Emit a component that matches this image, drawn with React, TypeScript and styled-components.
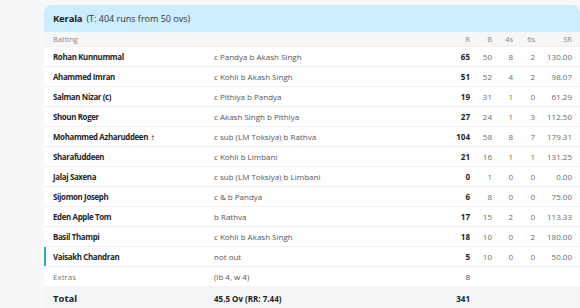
import React from "react";
import styled, { createGlobalStyle } from "styled-components";

const GlobalStyle = createGlobalStyle`
  html, body {
    margin: 0;
    padding: 0;
    background: #f8f8fa;
    overflow: hidden;
  }
  body {
    font-family: "Open Sans", "Noto Sans", sans-serif;
  }
`;

type Batter = {
  name: string;
  mark?: string;
  dismissal: string;
  r: string;
  b: string;
  fours: string;
  sixes: string;
  sr: string;
  active?: boolean;
};

const batters: Batter[] = [
  { name: "Rohan Kunnummal", dismissal: "c Pandya b Akash Singh", r: "65", b: "50", fours: "8", sixes: "2", sr: "130.00" },
  { name: "Ahammed Imran", dismissal: "c Kohli b Akash Singh", r: "51", b: "52", fours: "4", sixes: "2", sr: "98.07" },
  { name: "Salman Nizar (c)", dismissal: "c Pithiya b Pandya", r: "19", b: "31", fours: "1", sixes: "0", sr: "61.29" },
  { name: "Shoun Roger", dismissal: "c Akash Singh b Pithiya", r: "27", b: "24", fours: "1", sixes: "3", sr: "112.50" },
  { name: "Mohammed Azharuddeen", mark: "†", dismissal: "c sub (LM Toksiya) b Rathva", r: "104", b: "58", fours: "8", sixes: "7", sr: "179.31" },
  { name: "Sharafuddeen", dismissal: "c Kohli b Limbani", r: "21", b: "16", fours: "1", sixes: "1", sr: "131.25" },
  { name: "Jalaj Saxena", dismissal: "c sub (LM Toksiya) b Limbani", r: "0", b: "1", fours: "0", sixes: "0", sr: "0.00" },
  { name: "Sijomon Joseph", dismissal: "c & b Pandya", r: "6", b: "8", fours: "0", sixes: "0", sr: "75.00" },
  { name: "Eden Apple Tom", dismissal: "b Rathva", r: "17", b: "15", fours: "2", sixes: "0", sr: "113.33" },
  { name: "Basil Thampi", dismissal: "c Kohli b Akash Singh", r: "18", b: "10", fours: "0", sixes: "2", sr: "180.00" },
  { name: "Vaisakh Chandran", dismissal: "not out", r: "5", b: "10", fours: "0", sixes: "0", sr: "50.00", active: true },
];

function App() {
  return (
    <Page>
      <GlobalStyle />
      <Card>
        <TeamHeader>
          <TeamName>Kerala</TeamName>
          <Target>(T: 404 runs from 50 ovs)</Target>
        </TeamHeader>
        <HeadRow>
          <span>Batting</span>
          <span />
          <Num>R</Num>
          <Num>B</Num>
          <Num>4s</Num>
          <Num>6s</Num>
          <Num>SR</Num>
        </HeadRow>
        {batters.map((p) => (
          <Row key={p.name} $active={p.active}>
            <Name>
              {p.name}
              {p.mark && <Mark>{p.mark}</Mark>}
            </Name>
            <Dismissal>{p.dismissal}</Dismissal>
            <Runs>{p.r}</Runs>
            <Num>{p.b}</Num>
            <Num>{p.fours}</Num>
            <Num>{p.sixes}</Num>
            <Num>{p.sr}</Num>
          </Row>
        ))}
        <Row>
          <Label>Extras</Label>
          <Dismissal>(lb 4, w 4)</Dismissal>
          <ExtrasRuns>8</ExtrasRuns>
        </Row>
        <TotalRow>
          <TotalLabel>Total</TotalLabel>
          <TotalInfo>45.5 Ov (RR: 7.44)</TotalInfo>
          <Runs>341</Runs>
        </TotalRow>
      </Card>
    </Page>
  );
}

const Page = styled.div`
  padding: 5px 0 0 44px;
`;
const Card = styled.div`
  width: 536px;
  background: #ffffff;
  border-radius: 8px 8px 0 0;
  overflow: hidden;
`;
const TeamHeader = styled.div`
  height: 27px;
  display: flex;
  align-items: center;
  gap: 4px;
  padding-left: 9px;
  background: #cdedfc;
`;
const TeamName = styled.span`
  font-size: 9.5px;
  font-weight: 700;
  letter-spacing: -0.2px;
  color: #1a1a1a;
`;
const Target = styled.span`
  font-size: 9px;
  color: #333;
`;
const grid = `
  display: grid;
  grid-template-columns: 161px 1fr 30px 22px 21px 22px 37px;
  align-items: center;
  padding: 0 8px 0 9px;
`;
const HeadRow = styled.div`
  ${grid}
  height: 14px;
  background: #f6f6f7;
  font-size: 7.5px;
  color: #888;
`;
const Row = styled.div<{ $active?: boolean }>`
  ${grid}
  height: 19px;
  border-top: 1px solid #f0f0f2;
  font-size: 8px;
  color: #6a6a6a;
  box-shadow: ${(p) => (p.$active ? "inset 2px 0 0 #2aa6dd" : "none")};
`;
const Name = styled.span`
  font-size: 7.9px;
  font-weight: 700;
  letter-spacing: -0.35px;
  color: #262626;
`;
const Mark = styled.span`
  margin-left: 3px;
  font-weight: 400;
  font-size: 7px;
`;
const Dismissal = styled.span`
  color: #555;
`;
const Num = styled.span`
  text-align: right;
`;
const Runs = styled.span`
  text-align: right;
  font-weight: 700;
  color: #222;
`;
const Label = styled.span`
  color: #777;
`;
const ExtrasRuns = styled.span`
  text-align: right;
  color: #444;
`;
const TotalRow = styled.div`
  ${grid}
  height: 24px;
  background: #f4f5f7;
  font-size: 8px;
  color: #222;
`;
const TotalLabel = styled.span`
  font-size: 9.5px;
  font-weight: 700;
`;
const TotalInfo = styled.span`
  font-weight: 700;
`;

export default App;
